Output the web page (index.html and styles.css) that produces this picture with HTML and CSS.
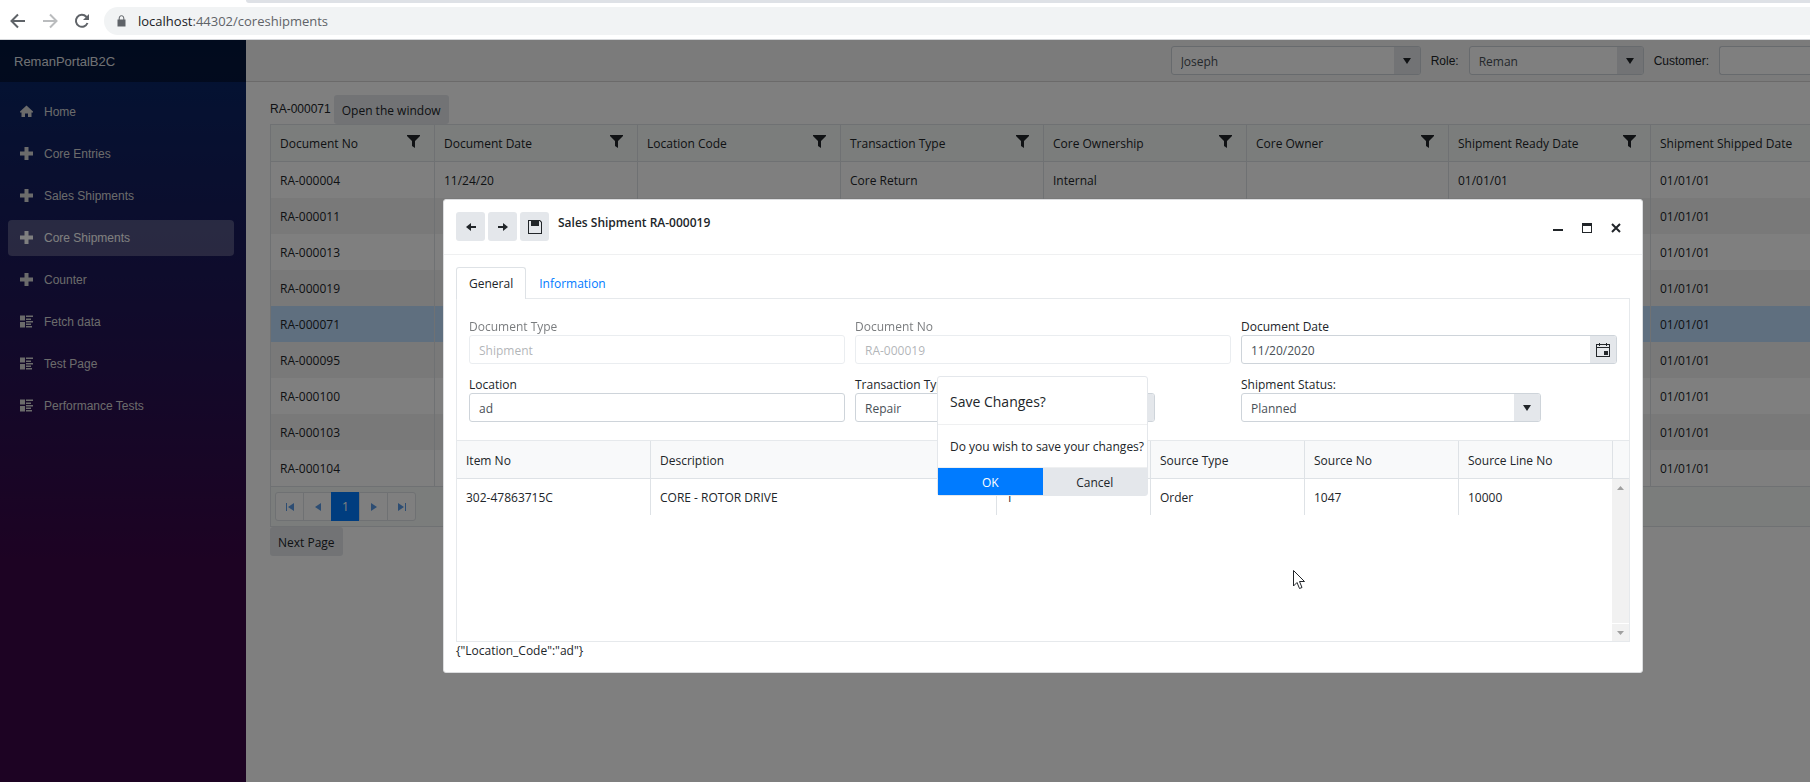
FILE: index.html
```html
<!DOCTYPE html>
<html lang="en">
<head>
  <meta charset="UTF-8">
  <meta name="viewport" content="width=device-width, initial-scale=1.0">
  <title>RemanPortalB2C</title>
  <link rel="stylesheet" href="styles.css">
</head>
<body>
  <!-- Icons used more than once -->
  <svg class="icon-defs" aria-hidden="true">
    <symbol id="icon-plus" viewBox="0 0 13 13"><path d="M4.500 0h4v4.500h4.500v4h-4.500v4.500h-4v-4.500h-4.500v-4h4.500z"/></symbol>
    <symbol id="icon-list" viewBox="0 0 13 13"><path d="M0 0.500h5v5h-5zM0 7h5v5.500h-5zM6 0.500h7v1.500h-7zM6 3.500h5v1.500h-5zM6 6h7v1.500h-7zM6 8.500h5v1.500h-5zM6 11h6v1.500h-6z"/></symbol>
    <symbol id="icon-filter" viewBox="0 0 13 13"><path d="M0 0h13v1l-5 5v7l-3-2v-5l-5-5z"/></symbol>
    <symbol id="icon-down" viewBox="0 0 8 6"><path d="M0 0h8l-4 6z"/></symbol>
  </svg>

  <div class="browser">
    <div class="tab-strip"></div>
    <div class="browser-bar">
      <button type="button" class="browser-btn" aria-label="Back">
        <svg viewBox="0 0 16 16"><path d="M15 8H2M8 1.500L1.500 8l6.500 6.500"/></svg>
      </button>
      <button type="button" class="browser-btn muted" aria-label="Forward">
        <svg viewBox="0 0 16 16"><path d="M1 8h13M8 1.500l6.500 6.500l-6.500 6.500"/></svg>
      </button>
      <button type="button" class="browser-btn" aria-label="Reload">
        <svg viewBox="0 0 16 16"><path d="M13.500 10a6 6 0 1 1-1.200-6.300l1.700 1.700"/><path class="solid" d="M15 1v6H9z"/></svg>
      </button>
      <div class="address">
        <svg class="lock" viewBox="0 0 9 12"><path d="M0.500 4.500h8v7h-8z"/><path class="shackle" d="M2.200 5V3a2.300 2.300 0 0 1 4.600 0v2"/></svg>
        <span><span class="host">localhost</span>:44302/coreshipments</span>
      </div>
    </div>
  </div>

  <div class="page">
    <div class="sidebar">
      <div class="brand">RemanPortalB2C</div>
      <nav class="nav">
        <a href="#"><svg viewBox="0 0 13 13"><path d="M6.500 0.500L0 6.500v1h1.500v4.500h3.500v-3.500h3v3.500h3.500v-4.500h1.500v-1z"/></svg>Home</a>
        <a href="#"><svg><use href="#icon-plus"/></svg>Core Entries</a>
        <a href="#"><svg><use href="#icon-plus"/></svg>Sales Shipments</a>
        <a href="#" class="active"><svg><use href="#icon-plus"/></svg>Core Shipments</a>
        <a href="#"><svg><use href="#icon-plus"/></svg>Counter</a>
        <a href="#"><svg><use href="#icon-list"/></svg>Fetch data</a>
        <a href="#"><svg><use href="#icon-list"/></svg>Test Page</a>
        <a href="#"><svg><use href="#icon-list"/></svg>Performance Tests</a>
      </nav>
    </div>

    <div class="main">
      <div class="top-row">
        <div class="dropdown user">
          <select aria-label="User"><option>Joseph</option></select>
          <span class="arrow"><svg><use href="#icon-down"/></svg></span>
        </div>
        <label for="role">Role:</label>
        <div class="dropdown role">
          <select id="role"><option>Reman</option></select>
          <span class="arrow"><svg><use href="#icon-down"/></svg></span>
        </div>
        <label for="customer">Customer:</label>
        <input type="text" id="customer" class="customer">
      </div>

      <div class="content">
        <div class="toolbar">
          <span>RA-000071</span>
          <button type="button" class="btn">Open the window</button>
        </div>
        <table class="grid">
          <colgroup>
            <col class="col-no"><col class="col"><col class="col"><col class="col"><col class="col"><col class="col-date"><col class="col-date"><col>
          </colgroup>
          <thead>
            <tr>
              <th>Document No<svg><use href="#icon-filter"/></svg></th>
              <th>Document Date<svg><use href="#icon-filter"/></svg></th>
              <th>Location Code<svg><use href="#icon-filter"/></svg></th>
              <th>Transaction Type<svg><use href="#icon-filter"/></svg></th>
              <th>Core Ownership<svg><use href="#icon-filter"/></svg></th>
              <th>Core Owner<svg><use href="#icon-filter"/></svg></th>
              <th>Shipment Ready Date<svg><use href="#icon-filter"/></svg></th>
              <th>Shipment Shipped Date</th>
            </tr>
          </thead>
          <tbody>
            <tr><td>RA-000004</td><td>11/24/20</td><td></td><td>Core Return</td><td>Internal</td><td></td><td>01/01/01</td><td>01/01/01</td></tr>
            <tr><td>RA-000011</td><td></td><td></td><td></td><td></td><td></td><td></td><td>01/01/01</td></tr>
            <tr><td>RA-000013</td><td></td><td></td><td></td><td></td><td></td><td></td><td>01/01/01</td></tr>
            <tr><td>RA-000019</td><td></td><td></td><td></td><td></td><td></td><td></td><td>01/01/01</td></tr>
            <tr class="selected"><td>RA-000071</td><td></td><td></td><td></td><td></td><td></td><td></td><td>01/01/01</td></tr>
            <tr><td>RA-000095</td><td></td><td></td><td></td><td></td><td></td><td></td><td>01/01/01</td></tr>
            <tr><td>RA-000100</td><td></td><td></td><td></td><td></td><td></td><td></td><td>01/01/01</td></tr>
            <tr><td>RA-000103</td><td></td><td></td><td></td><td></td><td></td><td></td><td>01/01/01</td></tr>
            <tr><td>RA-000104</td><td></td><td></td><td></td><td></td><td></td><td></td><td>01/01/01</td></tr>
          </tbody>
        </table>
        <div class="pager">
          <button type="button" aria-label="First page"><svg viewBox="0 0 8 8"><path d="M0 0h1v8h-1zM8 0v8l-6-4z"/></svg></button>
          <button type="button" aria-label="Previous page"><svg viewBox="0 0 8 8"><path d="M7 0v8l-6-4z"/></svg></button>
          <button type="button" class="current">1</button>
          <button type="button" aria-label="Next page"><svg viewBox="0 0 8 8"><path d="M1 0v8l6-4z"/></svg></button>
          <button type="button" aria-label="Last page"><svg viewBox="0 0 8 8"><path d="M7 0h1v8h-1zM0 0v8l6-4z"/></svg></button>
        </div>
        <button type="button" class="btn">Next Page</button>
      </div>
    </div>

    <div class="overlay"></div>

    <!-- Shipment window -->
    <div class="window" role="dialog" aria-labelledby="window-title">
      <div class="titlebar">
        <button type="button" class="btn icon-btn" aria-label="Previous"><svg viewBox="0 0 10 8"><path d="M5 0v3h5v2h-5v3l-5-4z"/></svg></button>
        <button type="button" class="btn icon-btn" aria-label="Next"><svg viewBox="0 0 10 8"><path d="M5 0v3h-5v2h5v3l5-4z"/></svg></button>
        <button type="button" class="btn icon-btn save" aria-label="Save"><svg viewBox="0 0 14 14"><path d="M0 0h12l2 2v12h-14zM1 1v12h12v-10.500l-1.500-1.500h-0.500v5h-8v-5z" fill-rule="evenodd"/><path d="M3 1h5v4h-5z"/></svg></button>
        <h2 id="window-title">Sales Shipment RA-000019</h2>
        <div class="window-actions">
          <button type="button" aria-label="Minimize"><svg viewBox="0 0 10 10"><path d="M0 6h10v2h-10z"/></svg></button>
          <button type="button" aria-label="Maximize"><svg viewBox="0 0 10 10"><path d="M0 0h10v10h-10zM1 3v6h8v-6z" fill-rule="evenodd"/></svg></button>
          <button type="button" aria-label="Close"><svg viewBox="0 0 10 10"><path class="line" d="M1 1l8 8M9 1l-8 8"/></svg></button>
        </div>
      </div>

      <div class="window-body">
        <div class="tabs" role="tablist">
          <button type="button" role="tab" class="tab active" aria-selected="true">General</button>
          <button type="button" role="tab" class="tab" aria-selected="false">Information</button>
        </div>
        <form class="panel">
          <div class="field disabled">
            <label for="docType">Document Type</label>
            <input type="text" id="docType" value="Shipment" disabled>
          </div>
          <div class="field disabled">
            <label for="docNo">Document No</label>
            <input type="text" id="docNo" value="RA-000019" disabled>
          </div>
          <div class="field">
            <label for="docDate">Document Date</label>
            <div class="dropdown">
              <input type="text" id="docDate" value="11/20/2020">
              <button type="button" class="arrow calendar" aria-label="Open calendar"><svg viewBox="0 0 14 14"><path d="M0 1h3v-1h1v1h6v-1h1v1h3v13h-14zM1 2v2h12v-2h-2v1h-1v-1h-6v1h-1v-1zM1 5v8h12v-8z" fill-rule="evenodd"/><path d="M8 8h4v4h-4z"/></svg></button>
            </div>
          </div>
          <div class="field">
            <label for="location">Location</label>
            <input type="text" id="location" value="ad">
          </div>
          <div class="field">
            <label for="transType">Transaction Type:</label>
            <div class="dropdown short">
              <select id="transType"><option>Repair</option></select>
              <span class="arrow"><svg><use href="#icon-down"/></svg></span>
            </div>
          </div>
          <div class="field">
            <label for="status">Shipment Status:</label>
            <div class="dropdown short">
              <select id="status"><option>Planned</option></select>
              <span class="arrow"><svg><use href="#icon-down"/></svg></span>
            </div>
          </div>
        </form>

        <div class="lines">
          <div class="lines-data">
            <table class="grid">
              <colgroup>
                <col class="col-item"><col><col class="col-line"><col class="col-line"><col class="col-line"><col class="col-line">
              </colgroup>
              <thead>
                <tr><th>Item No</th><th>Description</th><th></th><th>Source Type</th><th>Source No</th><th>Source Line No</th></tr>
              </thead>
              <tbody>
                <tr><td>302-47863715C</td><td>CORE - ROTOR DRIVE</td><td>1</td><td>Order</td><td>1047</td><td>10000</td></tr>
              </tbody>
            </table>
          </div>
          <div class="scroll">
            <div class="scroll-head"></div>
            <button type="button" aria-label="Scroll up"><svg viewBox="0 0 7 4"><path d="M0 4h7l-3.500-4z"/></svg></button>
            <div class="scroll-track"></div>
            <button type="button" aria-label="Scroll down"><svg viewBox="0 0 7 4"><path d="M0 0h7l-3.500 4z"/></svg></button>
          </div>
        </div>
        <div class="json">{"Location_Code":"ad"}</div>
      </div>
    </div>

    <!-- Save confirmation -->
    <div class="confirm" role="alertdialog" aria-labelledby="confirm-title">
      <h3 id="confirm-title">Save Changes?</h3>
      <p>Do you wish to save your changes?</p>
      <div class="confirm-actions">
        <button type="button" class="primary">OK</button>
        <button type="button">Cancel</button>
      </div>
    </div>

    <svg class="cursor" viewBox="0 0 12 19"><path d="M0.500 0.500v15.500l3.500-3.500l2.500 6l2.500-1l-2.500-6h5z"/></svg>
  </div>
</body>
</html>
```
FILE: styles.css
```css
* {
  box-sizing: border-box;
}
body {
  margin: 0;
  min-height: 100vh;
  display: flex;
  flex-direction: column;
  font-family: "Open Sans", "Segoe UI", sans-serif;
  font-size: 12px;
  line-height: 18px;
  color: #212529;
  background: #fff;
}
button, input, select {
  font: inherit;
  color: inherit;
  margin: 0;
}
button {
  border: none;
  background: none;
  padding: 0;
  cursor: pointer;
}
svg {
  display: block;
  fill: currentColor;
}
.icon-defs {
  display: none;
}

/* Browser chrome */
.browser {
  height: 40px;
  background: #fff;
  border-bottom: 1px solid #d5d7da;
}
.tab-strip {
  height: 3px;
  margin-left: 246px;
  background: #dee1e6;
  border-bottom-left-radius: 6px;
}
.browser-bar {
  display: flex;
  align-items: center;
  gap: 16px;
  padding: 4px 0 4px 10px;
}
.browser-btn {
  color: #5f6368;
}
.browser-btn.muted {
  color: #babcbe;
}
.browser-btn svg {
  width: 16px;
  height: 16px;
  fill: none;
  stroke: currentColor;
  stroke-width: 2;
}
.browser-btn .solid {
  fill: currentColor;
  stroke: none;
}
.address {
  flex: 1;
  display: flex;
  align-items: center;
  gap: 12px;
  height: 28px;
  margin-left: -2px;
  padding-left: 13px;
  border-radius: 14px 0 0 14px;
  background: #f1f3f4;
  color: #5f6368;
  font-size: 13px;
}
.address .host {
  color: #202124;
}
.lock {
  width: 9px;
  height: 12px;
}
.lock .shackle {
  fill: none;
  stroke: currentColor;
}

/* Page */
.page {
  position: relative;
  flex: 1;
  display: flex;
}
.overlay {
  position: absolute;
  inset: 0;
  background: rgba(0, 0, 0, 0.5);
}
.sidebar {
  width: 246px;
  flex: none;
  font-family: "Liberation Sans", Arial, sans-serif;
  background-image: linear-gradient(180deg, rgb(5, 39, 103) 0%, #3a0647 70%);
}
.brand {
  height: 42px;
  padding: 1px 14px 0;
  background: rgba(0, 0, 0, 0.4);
  color: rgba(255, 255, 255, 0.9);
  font-size: 13px;
  line-height: 42px;
}
.nav {
  display: flex;
  flex-direction: column;
  gap: 6px;
  padding: 12px 12px 0 8px;
}
.nav a {
  display: flex;
  align-items: center;
  gap: 11px;
  height: 36px;
  padding: 0 12px;
  border-radius: 4px;
  color: #d7d7d7;
  text-decoration: none;
}
.nav a.active {
  background: rgba(255, 255, 255, 0.25);
  color: #fff;
}
.nav svg {
  width: 13px;
  height: 13px;
  margin-bottom: 2px;
}
.main {
  flex: 1;
  min-width: 0;
  font-family: "Liberation Sans", Arial, sans-serif;
}
.top-row {
  display: flex;
  justify-content: flex-end;
  align-items: center;
  gap: 10px;
  height: 42px;
  background: #f7f7f7;
  border-bottom: 1px solid #d6d5d5;
}
.content {
  padding: 13px 0 0 24px;
}
.toolbar {
  display: flex;
  align-items: center;
  gap: 3px;
}
.toolbar span {
  padding-bottom: 2px;
}
.btn {
  height: 29px;
  padding: 2px 8px 0;
  border-radius: 3px;
  background: #e4e7eb;
  font-family: "Open Sans", "Segoe UI", sans-serif;
}

/* Inputs and drop-downs */
input, .dropdown {
  height: 29px;
  border: 1px solid #ced4da;
  border-radius: 3px;
  background: #fff;
  color: #495057;
  font-family: "Open Sans", "Segoe UI", sans-serif;
}
input {
  width: 100%;
  padding: 2px 9px 0;
}
.dropdown {
  display: flex;
  overflow: hidden;
}
.dropdown select, .dropdown input {
  flex: 1;
  min-width: 0;
  height: 27px;
  padding: 2px 9px 0;
  border: none;
  border-radius: 0;
  background: none;
  appearance: none;
}
.arrow {
  display: flex;
  align-items: center;
  justify-content: center;
  width: 26px;
  background: #e4e7eb;
  color: #212529;
}
.arrow svg {
  width: 8px;
  height: 6px;
}
.calendar svg {
  width: 14px;
  height: 14px;
}
.user {
  width: 250px;
}
.role {
  width: 175px;
}
.customer {
  width: 91px;
  border-right: none;
  border-radius: 3px 0 0 3px;
}

/* Grid */
.grid {
  width: 100%;
  table-layout: fixed;
  border-collapse: separate;
  border-spacing: 0;
  font-family: "Open Sans", "Segoe UI", sans-serif;
}
.grid th, .grid td {
  height: 36px;
  padding: 2px 10px 0 9px;
  border-left: 1px solid #dee2e6;
  text-align: left;
  font-weight: normal;
  white-space: nowrap;
}
.grid th {
  height: 37px;
  border-bottom: 1px solid #dee2e6;
  background: #f8f9fa;
}
.grid th svg {
  float: right;
  width: 13px;
  height: 13px;
  margin-right: 4px;
}
.content .grid {
  border-top: 1px solid #dee2e6;
  border-bottom: 1px solid #dee2e6;
}
.content .grid th {
  background: #f6faf8;
}
.content tbody tr:nth-child(even) {
  background: #f2f2f2;
}
.content tbody tr.selected {
  background: #bfdeff;
}
.col-no {
  width: 164px;
}
.col {
  width: 203px;
}
.col-date {
  width: 202px;
}
.pager {
  display: flex;
  padding: 5px 4px;
  border: 1px solid #dee2e6;
  border-width: 0 0 1px 1px;
  background: #f6faf8;
}
.pager button {
  width: 29px;
  height: 29px;
  margin-right: -1px;
  border: 1px solid #dee2e6;
  background: #fff;
  color: #5a9be6;
  font-family: "Open Sans", "Segoe UI", sans-serif;
}
.pager button:first-child {
  border-radius: 3px 0 0 3px;
}
.pager button:last-child {
  border-radius: 0 3px 3px 0;
}
.pager button.current {
  border-color: #007bff;
  background: #007bff;
  color: #fff;
}
.pager svg {
  width: 8px;
  height: 8px;
  margin: 0 auto;
}

/* Shipment window */
.window {
  position: absolute;
  top: 159px;
  left: 443px;
  width: 1200px;
  border: 1px solid #dcdddf;
  border-radius: 3px;
  background: #fff;
}
.titlebar {
  display: flex;
  align-items: flex-start;
  gap: 3px;
  height: 55px;
  padding: 12px 15px 0 12px;
  border-bottom: 1px solid #eff0f1;
}
.icon-btn {
  width: 29px;
  padding: 0;
}
.icon-btn svg {
  width: 10px;
  height: 8px;
  margin: 1px auto 0;
}
.icon-btn.save svg {
  width: 14px;
  height: 14px;
}
.titlebar h2 {
  flex: 1;
  margin: 2px 0 0 6px;
  font-size: 12px;
  font-weight: 600;
}
.window-actions {
  display: flex;
  gap: 7px;
}
.window-actions button {
  width: 22px;
  height: 32px;
}
.window-actions svg {
  width: 10px;
  height: 10px;
  margin: 0 auto;
}
.line {
  stroke: currentColor;
  stroke-width: 2;
}
.window-body {
  padding: 12px;
}
.tabs {
  display: flex;
}
.tab {
  height: 32px;
  margin-bottom: -1px;
  padding: 0 12px;
  border: 1px solid transparent;
  border-bottom: none;
  border-radius: 3px 3px 0 0;
  color: #007bff;
}
.tab.active {
  position: relative;
  border-color: #dee2e6;
  background: #fff;
  color: #212529;
}
.panel {
  display: grid;
  grid-template-columns: repeat(3, 1fr);
  gap: 10px;
  padding: 17px 12px 18px;
  border: 1px solid #e6e9ec;
}
.field label {
  display: block;
  padding-top: 3px;
  line-height: 16px;
}
.field.disabled {
  opacity: 0.6;
}
.field.disabled input {
  opacity: 0.7;
}
.short {
  width: 300px;
  max-width: 100%;
}
.lines {
  display: flex;
  height: 201px;
  border: 1px solid #e6e9ec;
  border-top: none;
}
.lines-data {
  flex: 1;
  min-width: 0;
}
.lines .grid th {
  height: 38px;
  padding-top: 3px;
}
.lines th:first-child, .lines td:first-child {
  border-left: none;
}
.col-item {
  width: 193px;
}
.col-line {
  width: 154px;
}
.scroll {
  display: flex;
  flex-direction: column;
  width: 17px;
}
.scroll-head {
  height: 38px;
  border-bottom: 1px solid #dee2e6;
  border-left: 1px solid #dee2e6;
  background: #f8f9fa;
}
.scroll button {
  height: 17px;
  background: #f1f1f1;
  color: #a0a0a0;
}
.scroll svg {
  width: 7px;
  height: 4px;
  margin: 0 auto;
}
.scroll-track {
  flex: 1;
  background: #f1f1f1;
  border-bottom: 1px solid #fff;
}

/* Save confirmation */
.confirm {
  position: absolute;
  top: 336px;
  left: 937px;
  width: 211px;
  border: 1px solid #e4e7eb;
  border-radius: 3px;
  background: #fff;
}
.confirm h3 {
  margin: 0;
  padding: 14px 12px 11px;
  border-bottom: 1px solid #eff0f1;
  font-size: 14px;
  font-weight: normal;
  line-height: 22px;
}
.confirm p {
  margin: 0;
  padding: 13px 12px 11px;
  border-bottom: 1px solid #eff0f1;
  white-space: nowrap;
}
.confirm-actions {
  display: flex;
}
.confirm-actions button {
  flex: 1;
  height: 27px;
  padding-top: 2px;
  background: #e4e7eb;
}
.confirm-actions .primary {
  background: #007bff;
  color: #fff;
}
.cursor {
  position: absolute;
  top: 530px;
  left: 1293px;
  width: 12px;
  height: 19px;
  fill: #fff;
  stroke: #212529;
}
```
